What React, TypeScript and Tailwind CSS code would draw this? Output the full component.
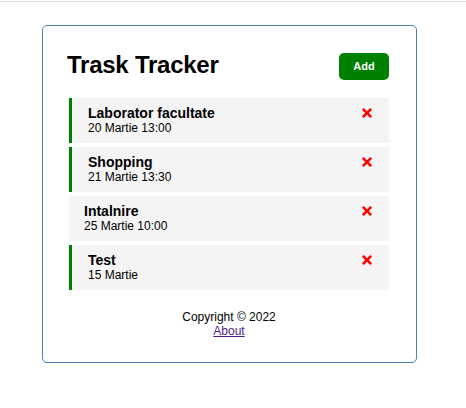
import { FaTimes } from 'react-icons/fa';

type Task = {
  id: number;
  text: string;
  day: string;
  reminder: boolean;
};

const tasks: Task[] = [
  { id: 1, text: 'Laborator facultate', day: '20 Martie 13:00', reminder: true },
  { id: 2, text: 'Shopping', day: '21 Martie 13:30', reminder: true },
  { id: 3, text: 'Intalnire', day: '25 Martie 10:00', reminder: false },
  { id: 4, text: 'Test', day: '15 Martie', reminder: true },
];

const TaskRow = ({ task }: { task: Task }) => (
  <div
    className={`h-[45px] bg-[#f4f4f4] pt-[7px] pr-[15px] ${
      task.reminder ? 'border-l-[3px] border-[#008000] pl-[16px]' : 'pl-[15px]'
    }`}
  >
    <h3 className="flex items-center justify-between text-[14px] font-bold leading-[16px] text-black">
      {task.text}
      <FaTimes className="text-[14px] text-[#ff0000]" />
    </h3>
    <p className="text-[12px] leading-[14px] text-black">{task.day}</p>
  </div>
);

const App = () => {
  return (
    <div className="min-h-screen w-full bg-white font-['Liberation_Sans',Arial,sans-serif]">
      <div className="pt-px">
        <div className="h-px w-full bg-[#dcdcdc]" />
      </div>

      <div className="ml-[42px] mt-[23px] h-[338px] w-[375px] rounded-[5px] border border-[#4682b4] pt-[26px] pl-[26px] pr-[27px]">
        <header className="mb-[18px] flex h-[28px] items-center justify-between">
          <h1 className="-ml-[2px] -mt-[2px] text-[24px] font-bold leading-[28px] tracking-[-0.25px] text-black">
            Trask Tracker
          </h1>
          <button className="h-[27px] w-[50px] rounded-[5px] bg-[#008000] text-[11px] font-bold text-white">
            Add
          </button>
        </header>

        <div className="flex flex-col gap-[4px]">
          {tasks.map((task) => (
            <TaskRow key={task.id} task={task} />
          ))}
        </div>

        <footer className="mt-[20px] text-center text-[12px] leading-[14px] text-black">
          <p>Copyright &copy; 2022</p>
          <a href="#" className="text-[#551a8b] underline">
            About
          </a>
        </footer>
      </div>
    </div>
  );
};

export default App;
